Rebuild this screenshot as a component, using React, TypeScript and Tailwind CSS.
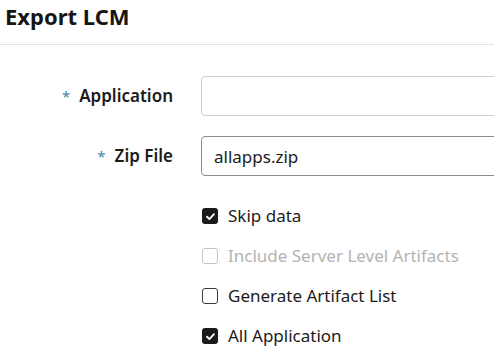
import React, { useState } from "react";

function Check({ checked, disabled }: { checked: boolean; disabled?: boolean }) {
  if (checked) {
    return (
      <span className="flex h-[16px] w-[16px] items-center justify-center rounded-[3px] bg-[#1c1b1a]">
        <svg width="11" height="11" viewBox="0 0 12 12" fill="none">
          <path d="M2.2 6.3 4.8 8.8 9.8 3.4" stroke="#fff" strokeWidth="2" strokeLinecap="round" strokeLinejoin="round" />
        </svg>
      </span>
    );
  }
  return (
    <span
      className={
        disabled
          ? "block h-[16px] w-[16px] rounded-[3px] border border-[#c4c4c4]"
          : "block h-[16px] w-[16px] rounded-[3px] border border-[#3a3938]"
      }
    />
  );
}

function CheckRow({ label, checked, disabled }: { label: string; checked: boolean; disabled?: boolean }) {
  return (
    <label className="flex h-[40px] items-center gap-[10px]">
      <span className="ml-[1px] block">
        <Check checked={checked} disabled={disabled} />
      </span>
      <span className={disabled ? "text-[17px] text-[#b3b3b3]" : "text-[17px] text-[#1c1b1a]"}>{label}</span>
    </label>
  );
}

export default function App() {
  const [zip, setZip] = useState("allapps.zip");
  return (
    <div className="h-[354px] w-[494px] overflow-hidden bg-white font-['Noto_Sans',sans-serif] text-[#1c1b1a]">
      <div className="h-[45px] border-b border-[#e3e3e3] pl-[5px] pt-[1px]">
        <h1 className="text-[22px] font-bold leading-[30px] text-[#161513]">Export LCM</h1>
      </div>
      <div className="grid grid-cols-[173px_320px] gap-x-[28px] pt-[31px]">
        <div className="flex h-[40px] items-center justify-end gap-[9px]">
          <span className="text-[15px] text-[#3d8aa8]">*</span>
          <span className="text-[17px] font-semibold">Application</span>
        </div>
        <input className="h-[40px] rounded-[4px] border border-[#cfcfcf] px-[12px] text-[17px] outline-none" />
        <div className="mt-[20px] flex h-[40px] items-center justify-end gap-[9px]">
          <span className="text-[15px] text-[#3d8aa8]">*</span>
          <span className="text-[17px] font-semibold">Zip File</span>
        </div>
        <input
          value={zip}
          onChange={(e) => setZip(e.target.value)}
          className="mt-[20px] h-[40px] rounded-[4px] border border-[#8c8c8c] px-[12px] text-[17px] outline-none"
        />
        <div />
        <div className="mt-[20px]">
          <CheckRow label="Skip data" checked />
          <CheckRow label="Include Server Level Artifacts" checked={false} disabled />
          <CheckRow label="Generate Artifact List" checked={false} />
          <CheckRow label="All Application" checked />
        </div>
      </div>
    </div>
  );
}
